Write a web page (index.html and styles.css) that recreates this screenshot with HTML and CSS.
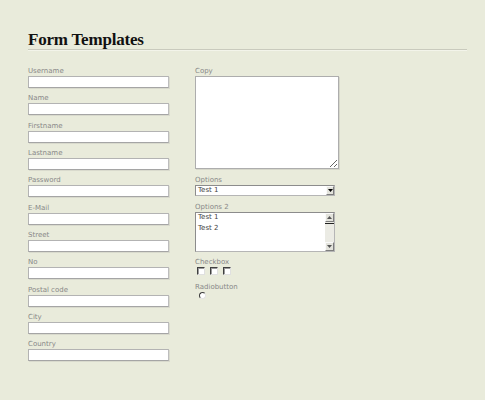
FILE: index.html
```html
<!DOCTYPE html>
<html>
<head>
<meta charset="utf-8">
<title>Form Templates</title>
<link rel="stylesheet" href="styles.css">
</head>
<body>
<div class="page">
  <h1 class="title">Form Templates</h1>
  <div class="cols">
    <div class="col col-left">
      <div class="field"><label class="lbl">Username</label><input class="txt" type="text"></div>
      <div class="field"><label class="lbl">Name</label><input class="txt" type="text"></div>
      <div class="field"><label class="lbl">Firstname</label><input class="txt" type="text"></div>
      <div class="field"><label class="lbl">Lastname</label><input class="txt" type="text"></div>
      <div class="field"><label class="lbl">Password</label><input class="txt" type="password"></div>
      <div class="field"><label class="lbl">E-Mail</label><input class="txt" type="text"></div>
      <div class="field"><label class="lbl">Street</label><input class="txt" type="text"></div>
      <div class="field"><label class="lbl">No</label><input class="txt" type="text"></div>
      <div class="field"><label class="lbl">Postal code</label><input class="txt" type="text"></div>
      <div class="field"><label class="lbl">City</label><input class="txt" type="text"></div>
      <div class="field"><label class="lbl">Country</label><input class="txt" type="text"></div>
    </div>
    <div class="col col-right">
      <div class="field"><label class="lbl">Copy</label><textarea class="area"></textarea></div>
      <div class="field">
        <label class="lbl">Options</label>
        <div class="select">
          <span class="select-val">Test 1</span>
          <span class="btn btn-select"><svg width="5" height="3" viewBox="0 0 5 3"><path d="M0 0h5L2.5 3z" fill="#000"/></svg></span>
        </div>
      </div>
      <div class="field">
        <label class="lbl">Options 2</label>
        <div class="listbox">
          <div class="items">
            <div class="item">Test 1</div>
            <div class="item">Test 2</div>
          </div>
          <div class="scrollbar">
            <span class="btn btn-sb"><svg width="5" height="3" viewBox="0 0 5 3"><path d="M0 3h5L2.5 0z" fill="#555"/></svg></span>
            <span class="thumb"></span>
            <span class="track"></span>
            <span class="btn btn-sb"><svg width="5" height="3" viewBox="0 0 5 3"><path d="M0 0h5L2.5 3z" fill="#555"/></svg></span>
          </div>
        </div>
      </div>
      <div class="field">
        <label class="lbl">Checkbox</label>
        <div class="checks"><span class="cb"></span><span class="cb"></span><span class="cb"></span></div>
      </div>
      <div class="field">
        <label class="lbl">Radiobutton</label>
        <span class="radio"></span>
      </div>
    </div>
  </div>
</div>
</body>
</html>
```

FILE: styles.css
```css
html, body {
  margin: 0;
  padding: 0;
  background: #e9ebdb;
}
body {
  font-family: "DejaVu Sans", Verdana, sans-serif;
}
.page {
  width: 439px;
  padding: 31px 0 0 28px;
}
.title {
  margin: 0;
  font-family: "Liberation Serif", "Times New Roman", serif;
  font-weight: bold;
  font-size: 17px;
  letter-spacing: -0.2px;
  line-height: 18px;
  color: #111;
  border-bottom: 1px solid #c9cabd;
  box-shadow: 0 1px 0 #f3f4ea;
}
.cols {
  display: flex;
  gap: 26px;
  margin-top: 17px;
}
.col-left {
  width: 141px;
}
.col-right {
  width: 146px;
}
.lbl {
  display: block;
  font-size: 7px;
  line-height: 8px;
  height: 8px;
  color: #888;
  margin-bottom: 1px;
  white-space: nowrap;
}
.txt {
  display: block;
  box-sizing: border-box;
  width: 141px;
  height: 12px;
  margin: 0 0 6.33px;
  padding: 0;
  border: 1px solid #b3b3b3;
  border-bottom-color: #a5a5a5;
  border-right-color: #bdbdbd;
  background: #fff;
  box-shadow: 1px 1px 0 #d9dacd;
  outline: none;
}
.area {
  display: block;
  box-sizing: border-box;
  width: 144px;
  height: 93px;
  margin: 0 0 7px;
  padding: 2px;
  border: 1px solid #adadad;
  background: #fff;
  box-shadow: 1px 1px 0 #d6d7ca;
  resize: both;
  outline: none;
}
.select {
  display: flex;
  align-items: center;
  box-sizing: border-box;
  width: 140px;
  height: 11px;
  margin: 0 0 7px;
  border: 1px solid #8c8c8c;
  border-right-color: #b5b5b5;
  border-bottom-color: #b5b5b5;
  background: #fff;
}
.select-val {
  flex: 1;
  font-size: 7px;
  line-height: 9px;
  color: #444;
  padding-left: 2px;
}
.btn {
  display: flex;
  align-items: center;
  justify-content: center;
  box-sizing: border-box;
  background: #e3e3dc;
  border: 1px solid;
  border-color: #fafafa #7e7e7e #7e7e7e #fafafa;
}
.btn-select {
  width: 8px;
  height: 9px;
}
.listbox {
  display: flex;
  box-sizing: border-box;
  width: 140px;
  height: 40px;
  margin: 0 0 6px;
  border: 1px solid #8c8c8c;
  border-right-color: #b5b5b5;
  border-bottom-color: #b5b5b5;
  background: #fff;
}
.items {
  flex: 1;
  padding-left: 2px;
  margin-top: -1px;
}
.item {
  font-size: 7px;
  line-height: 10.5px;
  color: #444;
}
.scrollbar {
  display: flex;
  flex-direction: column;
  width: 9px;
  background: #ebebe4;
}
.btn-sb {
  width: 9px;
  height: 9px;
  flex: none;
}
.thumb {
  height: 1px;
  margin-top: 1px;
  background: #222;
  flex: none;
}
.track {
  flex: 1;
}
.checks {
  display: flex;
  gap: 5px;
  padding-left: 2px;
  margin-bottom: 8px;
}
.cb {
  display: block;
  box-sizing: border-box;
  width: 8px;
  height: 8px;
  background: #fff;
  border: 1px solid;
  border-color: #404040 #e0e0e0 #e0e0e0 #404040;
  box-shadow: inset 1px 1px 0 #9a9a9a;
}
.radio {
  display: block;
  box-sizing: border-box;
  width: 7px;
  height: 7px;
  margin-left: 4px;
  border-radius: 50%;
  background: #fff;
  border: 1px solid;
  border-color: #3a3a3a #e2e2e2 #e2e2e2 #3a3a3a;
}
```
